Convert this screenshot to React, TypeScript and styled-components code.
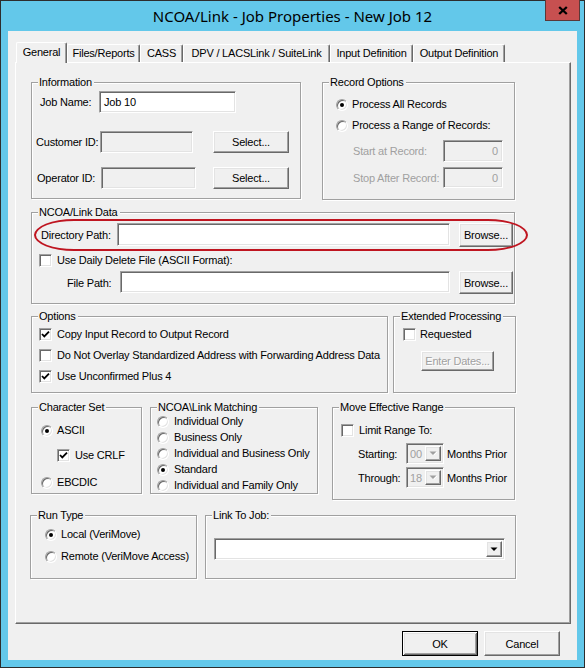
import React from "react";
import styled, { createGlobalStyle, css } from "styled-components";

const GlobalStyle = createGlobalStyle`
  html, body { margin: 0; padding: 0; background: #fff; }
  body {
    font-family: "Liberation Sans", Arial, sans-serif;
    font-size: 11px;
    letter-spacing: -0.2px;
    color: #000;
  }
  * { box-sizing: border-box; }
`;

const raised = css`
  border: 1px solid;
  border-color: #fff #696969 #696969 #fff;
  box-shadow: inset -1px -1px 0 #a0a0a0, inset 1px 1px 0 #e3e3e3;
`;

const sunken = css`
  border: 1px solid;
  border-color: #a0a0a0 #fff #fff #a0a0a0;
  box-shadow: inset 1px 1px 0 #696969, inset -1px -1px 0 #e3e3e3;
`;

const Window = styled.div`
  width: 585px;
  height: 668px;
  border: 1px solid #2d2d2d;
  background: #63c8ea;
  display: flex;
  flex-direction: column;
`;

const TitleBar = styled.div`
  height: 30px;
  display: grid;
  grid-template-columns: 1fr auto 1fr;
  align-items: center;
`;

const Title = styled.div`
  grid-column: 2;
  font-family: "Noto Sans", "Open Sans", sans-serif;
  font-size: 15px;
  letter-spacing: 0;
  color: #000;
  white-space: nowrap;
`;

const CloseButton = styled.div`
  grid-column: 3;
  justify-self: end;
  align-self: start;
  margin-top: -1px;
  margin-right: 4px;
  width: 35px;
  height: 21px;
  background: #c75050;
  border: 1px solid #5a3838;
  border-top: none;
  display: flex;
  align-items: center;
  justify-content: center;
`;

const Client = styled.div`
  flex: 1;
  margin: 0 7px 7px;
  background: #f0f0f0;
  display: flex;
  flex-direction: column;
`;

const TabArea = styled.div`
  margin: 11px 0 0 7px;
  width: 556px;
`;

const TabStrip = styled.div`
  display: flex;
  align-items: flex-end;
  height: 20px;
  padding-left: 1px;
`;

const Tab = styled.div<{ $active?: boolean; $w: number }>`
  width: ${(p) => p.$w}px;
  height: ${(p) => (p.$active ? 21 : 18)}px;
  margin-bottom: ${(p) => (p.$active ? -1 : 0)}px;
  padding-top: ${(p) => (p.$active ? 3 : 2)}px;
  position: relative;
  z-index: ${(p) => (p.$active ? 2 : 1)};
  background: #f0f0f0;
  border-top: 1px solid #fff;
  border-left: 1px solid #fff;
  border-right: 1px solid #696969;
  border-top-left-radius: 2px;
  border-top-right-radius: 2px;
  box-shadow: inset -1px 0 0 #a0a0a0;
  text-align: center;
  line-height: 13px;
  white-space: nowrap;
`;

const Panel = styled.div`
  width: 556px;
  height: 562px;
  border: 1px solid;
  border-color: #fff #696969 #696969 #fff;
  box-shadow: inset -1px -1px 0 #a0a0a0;
  padding-left: 15px;
  display: flex;
  flex-direction: column;
`;

const Row = styled.div<{ $mt: number }>`
  display: flex;
  align-items: flex-start;
  margin-top: ${(p) => p.$mt}px;
`;

const Group = styled.div<{ $w: number; $h: number; $ml?: number }>`
  position: relative;
  width: ${(p) => p.$w}px;
  height: ${(p) => p.$h}px;
  margin-left: ${(p) => p.$ml ?? 0}px;
  border: 1px solid #a0a0a0;
  box-shadow: inset 1px 1px 0 #fff, 1px 1px 0 #fff;
  display: flex;
  flex-direction: column;
`;

const Legend = styled.span`
  position: absolute;
  top: -7px;
  left: 6px;
  padding: 0 2px 0 1px;
  background: #f0f0f0;
  line-height: 13px;
  white-space: nowrap;
`;

const FieldRow = styled.div<{ $mt: number; $h: number; $pl?: number }>`
  display: flex;
  align-items: flex-start;
  height: ${(p) => p.$h}px;
  margin-top: ${(p) => p.$mt}px;
  padding-left: ${(p) => p.$pl ?? 0}px;
`;

const FieldLabel = styled.span<{ $w: number; $pl: number; $disabled?: boolean }>`
  width: ${(p) => p.$w}px;
  padding-left: ${(p) => p.$pl}px;
  align-self: stretch;
  display: flex;
  align-items: center;
  white-space: nowrap;
  color: ${(p) => (p.$disabled ? "#a0a0a0" : "#000")};
`;

const Inline = styled.span<{ $ml: number }>`
  margin-left: ${(p) => p.$ml}px;
  align-self: center;
  white-space: nowrap;
`;

const TextBox = styled.div<{ $w: number; $h: number; $disabled?: boolean; $right?: boolean }>`
  ${sunken};
  width: ${(p) => p.$w}px;
  height: ${(p) => p.$h}px;
  background: ${(p) => (p.$disabled ? "#f0f0f0" : "#fff")};
  color: ${(p) => (p.$disabled ? "#a0a0a0" : "#000")};
  padding: 0 4px;
  display: flex;
  align-items: center;
  justify-content: ${(p) => (p.$right ? "flex-end" : "flex-start")};
  white-space: nowrap;
`;

const Button = styled.div<{
  $w: number;
  $h: number;
  $ml?: number;
  $mt?: number;
  $default?: boolean;
  $disabled?: boolean;
}>`
  ${raised};
  width: ${(p) => p.$w}px;
  height: ${(p) => p.$h}px;
  margin-left: ${(p) => p.$ml ?? 0}px;
  margin-top: ${(p) => p.$mt ?? 0}px;
  flex-shrink: 0;
  align-self: flex-start;
  background: #f0f0f0;
  display: flex;
  align-items: center;
  justify-content: center;
  white-space: nowrap;
  color: ${(p) => (p.$disabled ? "#a0a0a0" : "#000")};
  text-shadow: ${(p) => (p.$disabled ? "1px 1px 0 #fff" : "none")};
  ${(p) =>
    p.$default &&
    css`
      border: 1px solid #000;
      box-shadow: inset 1px 1px 0 #fff, inset -1px -1px 0 #696969,
        inset 2px 2px 0 #e3e3e3, inset -2px -2px 0 #a0a0a0;
    `}
`;

const OptionRow = styled.div<{ $mt: number; $pl: number }>`
  display: flex;
  align-items: center;
  height: 13px;
  margin-top: ${(p) => p.$mt}px;
  padding-left: ${(p) => p.$pl}px;
`;

const CheckBox = styled.span`
  ${sunken};
  width: 13px;
  height: 13px;
  background: #fff;
  flex-shrink: 0;
  display: flex;
  align-items: center;
  justify-content: center;
`;

const RadioBox = styled.span`
  ${sunken};
  width: 12px;
  height: 12px;
  border-radius: 50%;
  background: #fff;
  flex-shrink: 0;
  display: flex;
  align-items: center;
  justify-content: center;
`;

const RadioDot = styled.span`
  width: 4px;
  height: 4px;
  border-radius: 50%;
  background: #000;
`;

const OptionText = styled.span<{ $gap: number }>`
  margin-left: ${(p) => p.$gap}px;
  line-height: 13px;
  white-space: nowrap;
`;

const ComboBox = styled.div<{ $w: number; $h: number; $disabled?: boolean }>`
  ${sunken};
  width: ${(p) => p.$w}px;
  height: ${(p) => p.$h}px;
  padding: 2px;
  display: flex;
  background: ${(p) => (p.$disabled ? "#f0f0f0" : "#fff")};
  color: ${(p) => (p.$disabled ? "#a0a0a0" : "#000")};
`;

const ComboValue = styled.span`
  flex: 1;
  display: flex;
  align-items: center;
  padding-left: 1px;
`;

const DropButton = styled.span`
  ${raised};
  width: 16px;
  background: #f0f0f0;
  display: flex;
  align-items: center;
  justify-content: center;
`;

const Highlight = styled.div`
  position: absolute;
  left: 2px;
  top: 6px;
  width: 494px;
  height: 32px;
  border: 2.5px solid #bf1520;
  border-radius: 40px / 16px;
  pointer-events: none;
`;

const Footer = styled.div`
  display: flex;
  justify-content: flex-end;
  gap: 6px;
  margin-top: 7px;
  padding-right: 17px;
`;

const tabs = [
  { label: "General", w: 51 },
  { label: "Files/Reports", w: 73 },
  { label: "CASS", w: 43 },
  { label: "DPV / LACSLink / SuiteLink", w: 147 },
  { label: "Input Definition", w: 83 },
  { label: "Output Definition", w: 92 },
];

const matching = [
  "Individual Only",
  "Business Only",
  "Individual and Business Only",
  "Standard",
  "Individual and Family Only",
];

type OptProps = {
  checked?: boolean;
  mt: number;
  pl: number;
  gap: number;
  children: React.ReactNode;
};

const Checkbox = ({ checked, mt, pl, gap, children }: OptProps) => (
  <OptionRow $mt={mt} $pl={pl}>
    <CheckBox>
      {checked && (
        <svg width="9" height="9" viewBox="0 0 9 9">
          <path d="M1 4 L3.3 6.4 L8 1.6" fill="none" stroke="#000" strokeWidth="1.8" />
        </svg>
      )}
    </CheckBox>
    <OptionText $gap={gap}>{children}</OptionText>
  </OptionRow>
);

const Radio = ({ checked, mt, pl, gap, children }: OptProps) => (
  <OptionRow $mt={mt} $pl={pl}>
    <RadioBox>{checked && <RadioDot />}</RadioBox>
    <OptionText $gap={gap}>{children}</OptionText>
  </OptionRow>
);

const Arrow = ({ disabled }: { disabled?: boolean }) => (
  <svg width="8" height="5" viewBox="0 0 8 5">
    {disabled && <path d="M1.5 1 H8.5 L5 4.5 Z" fill="#fff" />}
    <path d="M0.5 0.5 H7.5 L4 4 Z" fill={disabled ? "#a0a0a0" : "#000"} />
  </svg>
);

const Combo = (props: { w: number; h: number; value?: string; disabled?: boolean }) => (
  <ComboBox $w={props.w} $h={props.h} $disabled={props.disabled}>
    <ComboValue>{props.value}</ComboValue>
    <DropButton>
      <Arrow disabled={props.disabled} />
    </DropButton>
  </ComboBox>
);

export default function App() {
  return (
    <>
      <GlobalStyle />
      <Window>
        <TitleBar>
          <Title>NCOA/Link - Job Properties - New Job 12</Title>
          <CloseButton>
            <svg width="10" height="9" viewBox="0 0 10 9">
              <path d="M1.2 1 L8.8 8 M8.8 1 L1.2 8" stroke="#000" strokeWidth="2.3" />
            </svg>
          </CloseButton>
        </TitleBar>
        <Client>
          <TabArea>
            <TabStrip>
              {tabs.map((t, i) => (
                <Tab key={t.label} $w={t.w} $active={i === 0}>
                  {t.label}
                </Tab>
              ))}
            </TabStrip>
            <Panel>
              <Row $mt={19}>
                <Group $w={270} $h={117}>
                  <Legend>Information</Legend>
                  <FieldRow $mt={8} $h={22}>
                    <FieldLabel $w={67} $pl={8}>Job Name:</FieldLabel>
                    <TextBox $w={137} $h={22}>Job 10</TextBox>
                  </FieldRow>
                  <FieldRow $mt={18} $h={22}>
                    <FieldLabel $w={68} $pl={4}>Customer ID:</FieldLabel>
                    <TextBox $w={93} $h={22} $disabled />
                    <Button $w={76} $h={22} $ml={20}>Select...</Button>
                  </FieldRow>
                  <FieldRow $mt={14} $h={22}>
                    <FieldLabel $w={69} $pl={5}>Operator ID:</FieldLabel>
                    <TextBox $w={95} $h={22} $disabled />
                    <Button $w={76} $h={22} $ml={17}>Select...</Button>
                  </FieldRow>
                </Group>
                <Group $w={193} $h={118} $ml={21}>
                  <Legend>Record Options</Legend>
                  <Radio checked mt={15} pl={13} gap={4}>Process All Records</Radio>
                  <Radio mt={8} pl={13} gap={4}>Process a Range of Records:</Radio>
                  <FieldRow $mt={8} $h={22}>
                    <FieldLabel $w={120} $pl={30} $disabled>Start at Record:</FieldLabel>
                    <TextBox $w={60} $h={22} $disabled $right>0</TextBox>
                  </FieldRow>
                  <FieldRow $mt={5} $h={21}>
                    <FieldLabel $w={120} $pl={30} $disabled>Stop After Record:</FieldLabel>
                    <TextBox $w={60} $h={21} $disabled $right>0</TextBox>
                  </FieldRow>
                </Group>
              </Row>

              <Row $mt={12}>
                <Group $w={484} $h={92}>
                  <Legend>NCOA/Link Data</Legend>
                  <FieldRow $mt={10} $h={24}>
                    <FieldLabel $w={85} $pl={9}>Directory Path:</FieldLabel>
                    <TextBox $w={333} $h={23} />
                    <Button $w={54} $h={24} $ml={9}>Browse...</Button>
                  </FieldRow>
                  <Checkbox mt={7} pl={7} gap={5}>Use Daily Delete File (ASCII Format):</Checkbox>
                  <FieldRow $mt={4} $h={23}>
                    <FieldLabel $w={88} $pl={35}>File Path:</FieldLabel>
                    <TextBox $w={330} $h={22} />
                    <Button $w={54} $h={23} $ml={9}>Browse...</Button>
                  </FieldRow>
                  <Highlight />
                </Group>
              </Row>

              <Row $mt={12}>
                <Group $w={357} $h={77}>
                  <Legend>Options</Legend>
                  <Checkbox checked mt={11} pl={7} gap={5}>Copy Input Record to Output Record</Checkbox>
                  <Checkbox mt={8} pl={7} gap={5}>
                    Do Not Overlay Standardized Address with Forwarding Address Data
                  </Checkbox>
                  <Checkbox checked mt={8} pl={7} gap={5}>Use Unconfirmed Plus 4</Checkbox>
                </Group>
                <Group $w={123} $h={77} $ml={5}>
                  <Legend>Extended Processing</Legend>
                  <Checkbox mt={11} pl={9} gap={4}>Requested</Checkbox>
                  <Button $w={73} $h={20} $ml={27} $mt={10} $disabled>Enter Dates...</Button>
                </Group>
              </Row>

              <Row $mt={14}>
                <Group $w={111} $h={87}>
                  <Legend>Character Set</Legend>
                  <Radio checked mt={16} pl={9} gap={4}>ASCII</Radio>
                  <Checkbox checked mt={12} pl={25} gap={5}>Use CRLF</Checkbox>
                  <Radio mt={14} pl={9} gap={4}>EBCDIC</Radio>
                </Group>
                <Group $w={168} $h={87} $ml={8}>
                  <Legend>NCOA\Link Matching</Legend>
                  {matching.map((m, i) => (
                    <Radio key={m} checked={m === "Standard"} mt={i === 0 ? 7 : 3} pl={6} gap={5}>
                      {m}
                    </Radio>
                  ))}
                </Group>
                <Group $w={183} $h={93} $ml={14}>
                  <Legend>Move Effective Range</Legend>
                  <Checkbox mt={16} pl={8} gap={5}>Limit Range To:</Checkbox>
                  <FieldRow $mt={6} $h={21}>
                    <FieldLabel $w={73} $pl={25}>Starting:</FieldLabel>
                    <Combo w={38} h={21} value="00" disabled />
                    <Inline $ml={3}>Months Prior</Inline>
                  </FieldRow>
                  <FieldRow $mt={3} $h={21}>
                    <FieldLabel $w={73} $pl={25}>Through:</FieldLabel>
                    <Combo w={38} h={21} value="18" disabled />
                    <Inline $ml={3}>Months Prior</Inline>
                  </FieldRow>
                </Group>
              </Row>

              <Row $mt={15}>
                <Group $w={167} $h={64} $ml={-1}>
                  <Legend>Run Type</Legend>
                  <Radio checked mt={12} pl={14} gap={4}>Local (VeriMove)</Radio>
                  <Radio mt={9} pl={14} gap={4}>Remote (VeriMove Access)</Radio>
                </Group>
                <Group $w={311} $h={64} $ml={8}>
                  <Legend>Link To Job:</Legend>
                  <FieldRow $mt={22} $h={22} $pl={8}>
                    <Combo w={291} h={22} />
                  </FieldRow>
                </Group>
              </Row>
            </Panel>
          </TabArea>
          <Footer>
            <Button $w={76} $h={25} $default>OK</Button>
            <Button $w={76} $h={25}>Cancel</Button>
          </Footer>
        </Client>
      </Window>
    </>
  );
}
